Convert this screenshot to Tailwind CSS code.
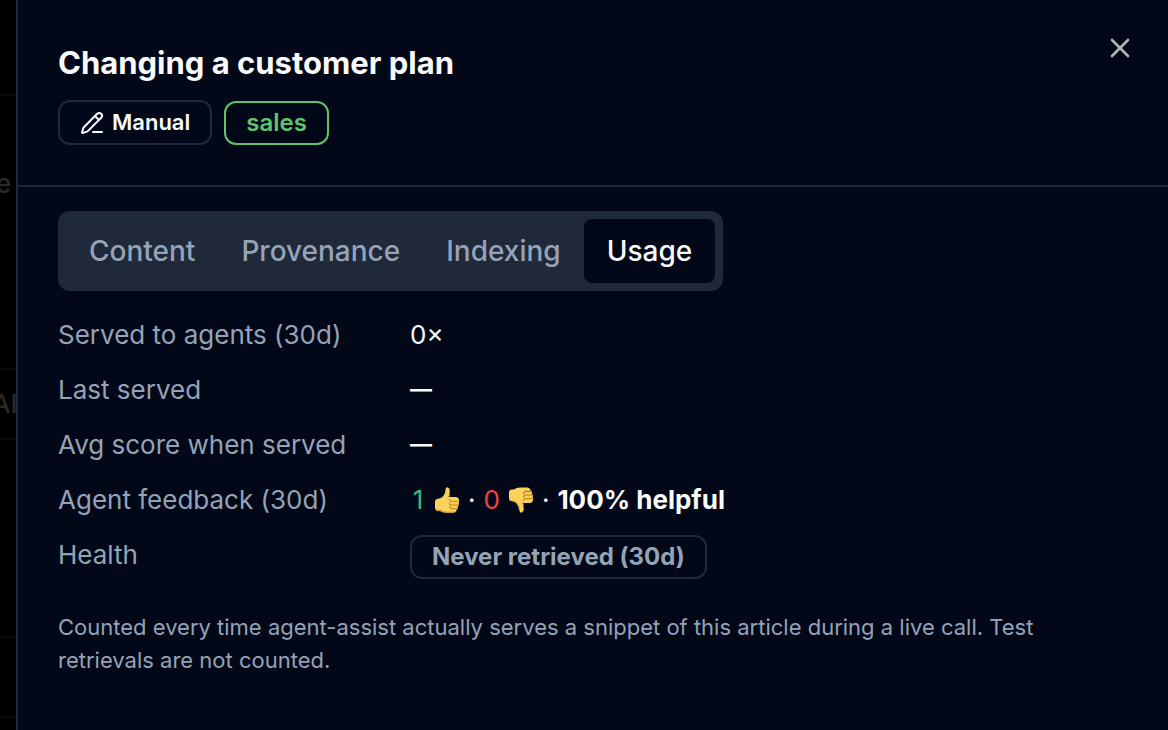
<!DOCTYPE html>
<html lang="en">
<head>
  <meta charset="UTF-8">
  <meta name="viewport" content="width=device-width, initial-scale=1.0">
  <title>Changing a customer plan</title>
  <script src="https://cdn.jsdelivr.net/npm/@tailwindcss/browser@4"></script>
</head>
<body class="flex min-h-screen overflow-hidden bg-black font-['Inter',sans-serif] text-[#f8fafc]">
  <!-- Dimmed page behind the drawer -->
  <div class="flex w-4 shrink-0 flex-col overflow-hidden text-[26px] leading-8 font-medium whitespace-nowrap text-[#29292a]" aria-hidden="true">
    <div class="h-24 border-b-2 border-[#08090b]"></div>
    <div class="h-[274px] border-b-2 border-[#08090b] pt-[72px]"><span class="-ml-1">e</span></div>
    <div class="flex h-[70px] items-center border-b-2 border-[#08090b]"><span class="-ml-2">AI</span></div>
    <div class="h-[198px] border-b-2 border-[#08090b]"></div>
    <div class="h-20 border-b-2 border-[#08090b]"></div>
  </div>

  <aside class="min-w-0 flex-1 border-l-2 border-[#1f293a] bg-[#020817]" role="dialog" aria-labelledby="title">
    <header class="flex items-start justify-between border-b-2 border-[#1f293a] pt-9 pr-9 pb-10 pl-10">
      <div class="pt-1">
        <h1 id="title" class="text-[31px] leading-[46px] font-bold">Changing a customer plan</h1>
        <div class="mt-[14px] flex items-end gap-3">
          <span class="flex h-[45px] items-center gap-2 rounded-xl border-2 border-[#1f293a] px-5 text-[22px] font-semibold">
            <svg class="size-6" viewBox="0 0 24 24" fill="none" stroke="currentColor" stroke-width="2" stroke-linecap="round" stroke-linejoin="round">
              <path d="M13 21h9" />
              <path d="M15 5l4 4" />
              <path d="M21.174 6.812a1 1 0 0 0-3.986-3.987L3.842 16.174a2 2 0 0 0-.5.83l-1.321 4.352a.5.5 0 0 0 .623.622l4.353-1.32a2 2 0 0 0 .83-.497z" />
            </svg>
            Manual
          </span>
          <span class="flex h-11 items-center rounded-xl border-2 border-[#5fc46b] px-5 text-2xl font-semibold text-[#5fc46b]">sales</span>
        </div>
      </div>
      <button type="button" class="text-[#b3b5b9]" aria-label="Close">
        <svg class="size-6" viewBox="0 0 24 24" fill="none" stroke="currentColor" stroke-width="2.6" stroke-linecap="round">
          <path d="M4 4l16 16M20 4L4 20" />
        </svg>
      </button>
    </header>

    <main class="px-10 pt-6 pb-10">
      <div class="inline-flex rounded-xl bg-[#1f293a] p-2 align-top text-[28px] leading-10 font-medium text-[#94a3b8]" role="tablist">
        <button type="button" role="tab" class="rounded-lg px-[23px] py-3">Content</button>
        <button type="button" role="tab" class="rounded-lg px-[23px] py-3">Provenance</button>
        <button type="button" role="tab" class="rounded-lg px-[23px] py-3">Indexing</button>
        <button type="button" role="tab" class="rounded-lg bg-[#020817] px-[23px] py-3 text-[#f8fafc]" aria-selected="true">Usage</button>
      </div>

      <dl class="mt-6 grid grid-cols-[336px_1fr] gap-4 text-[26px] leading-[39px]">
        <dt class="text-[#94a3b8]">Served to agents (30d)</dt>
        <dd>0×</dd>
        <dt class="text-[#94a3b8]">Last served</dt>
        <dd class="text-[22px] font-bold">—</dd>
        <dt class="text-[#94a3b8]">Avg score when served</dt>
        <dd class="text-[22px] font-bold">—</dd>
        <dt class="text-[#94a3b8]">Agent feedback (30d)</dt>
        <dd class="flex items-center gap-2">
          <span class="w-4 text-center text-[#3fb77f]">1</span>
          <svg class="size-[26px]" viewBox="0 0 26 26" role="img" aria-label="helpful votes">
            <path fill="#fbd35c" d="M1 14.500Q1 12.500 3 12L7 11Q10 9 11 6L11.600 2Q12 0 13.800.4Q16 1 15.700 4.500L14.800 10H22Q25 10.200 24.800 12.500Q25.600 14 24.700 15.800Q25.300 18 23.800 19.600Q24.300 22 22.300 23Q22 25.500 19 25.500H12Q8 25.500 6 23.500H3Q1 23 1 21Z" />
            <path fill="#e9a936" d="M2 21.500Q4 23 7 22.200Q10 25 19 24.500Q22 25 22.600 22.500Q22.500 25.800 19 25.800H12Q8 25.800 6 24H3Q1.500 23.500 2 21.500Z" />
            <path fill="none" stroke="#c9821f" stroke-width="1.100" stroke-linecap="round" d="M24 14.200H17.500Q15.500 14 15.500 12.500M24 18H17.500Q15.500 17.500 15.700 15.500M23 21.600H17.500Q15.500 21 15.700 19M14.800 10Q15.500 8.500 15.500 7" />
          </svg>
          <span>·</span>
          <span class="text-[#ef4444]">0</span>
          <svg class="size-[26px]" viewBox="0 0 26 26" role="img" aria-label="unhelpful votes">
            <g transform="matrix(1 0 0 -1 0 26)">
              <path fill="#fbd35c" d="M1 14.500Q1 12.500 3 12L7 11Q10 9 11 6L11.600 2Q12 0 13.800.4Q16 1 15.700 4.500L14.800 10H22Q25 10.200 24.800 12.500Q25.600 14 24.700 15.800Q25.300 18 23.800 19.600Q24.300 22 22.300 23Q22 25.500 19 25.500H12Q8 25.500 6 23.500H3Q1 23 1 21Z" />
              <path fill="none" stroke="#e0a035" stroke-width="1.200" stroke-linecap="round" d="M2 13Q6 12 8.500 10.500Q11 8 11.600 3" />
              <path fill="none" stroke="#b8741d" stroke-width="1.100" stroke-linecap="round" d="M24 14.200H17.500Q15.500 14 15.500 12.500M24 18H17.500Q15.500 17.500 15.700 15.500M23 21.600H17.500Q15.500 21 15.700 19M14.800 10Q15.500 8.500 15.500 7" />
            </g>
          </svg>
          <span>·</span>
          <strong class="font-bold">100% helpful</strong>
        </dd>
        <dt class="text-[#94a3b8]">Health</dt>
        <dd>
          <span class="inline-flex h-11 items-center rounded-xl border-2 border-[#1f293a] px-5 text-2xl font-bold text-[#94a3b8]">Never retrieved (30d)</span>
        </dd>
      </dl>

      <p class="mt-8 text-[22px] leading-[33px] text-[#94a3b8]">Counted every time agent-assist actually serves a snippet of this article during a live call. Test retrievals are not counted.</p>
    </main>
  </aside>
</body>
</html>
